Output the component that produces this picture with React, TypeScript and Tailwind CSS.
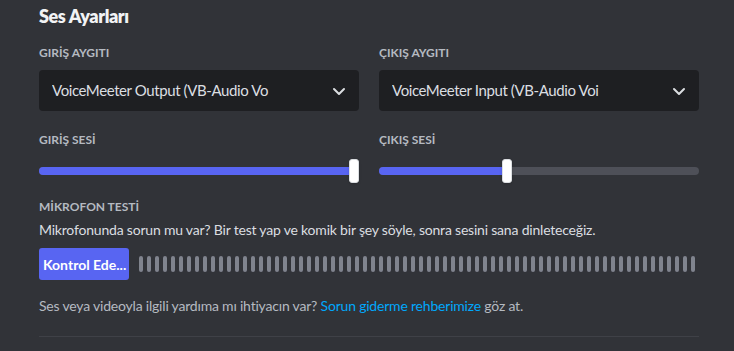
import React from "react";

const Chevron: React.FC = () => (
  <svg width="24" height="24" viewBox="0 0 24 24" fill="none" className="shrink-0">
    <path d="M7 10l5 5 5-5" stroke="#dbdee1" strokeWidth="2" strokeLinecap="round" strokeLinejoin="round" />
  </svg>
);

const Label: React.FC<{ children: React.ReactNode }> = ({ children }) => (
  <div className="text-[12px] leading-4 font-bold text-[#b5bac1] uppercase">{children}</div>
);

const Select: React.FC<{ value: string }> = ({ value }) => (
  <div className="mt-[9px] flex items-center h-[41px] rounded-[4px] bg-[#1e1f22] pl-[13px] pr-[8px]">
    <span className="flex-1 overflow-hidden whitespace-nowrap text-[15px] tracking-[-0.4px] text-[#dbdee1]">{value}</span>
    <Chevron />
  </div>
);

const Slider: React.FC<{ pct: number }> = ({ pct }) => (
  <div className="relative mt-[11px] h-6 flex items-center">
    <div className="w-full h-2 rounded-full bg-[#4e5058] overflow-hidden">
      <div className="h-full bg-[#5865f2]" style={{ width: `${pct}%` }} />
    </div>
    <div
      className="absolute top-0 w-[10px] h-6 rounded-[3px] bg-white border border-[#dbdee1] shadow"
      style={{ left: `calc(${pct}% - 5px)` }}
    />
  </div>
);

const App: React.FC = () => {
  return (
    <div className="w-[734px] h-[351px] bg-[#313338] overflow-hidden font-['Lato',sans-serif]">
      <div className="w-[660px] ml-[39px]">
        <h2 className="pt-1 text-[18px] leading-6 font-extrabold tracking-[-0.4px] text-[#f2f3f5]">Ses Ayarları</h2>

        <div className="mt-[17px] grid grid-cols-2 gap-5">
          <div>
            <Label>Giri̇ş Aygıtı</Label>
            <Select value="VoiceMeeter Output (VB-Audio Vo" />
          </div>
          <div>
            <Label>Çıkış Aygıtı</Label>
            <Select value="VoiceMeeter Input (VB-Audio Voi" />
          </div>
        </div>

        <div className="mt-[21px] grid grid-cols-2 gap-5">
          <div>
            <Label>Giri̇ş Sesi̇</Label>
            <Slider pct={98.4} />
          </div>
          <div>
            <Label>Çıkış Sesi̇</Label>
            <Slider pct={40} />
          </div>
        </div>

        <div className="mt-4">
          <Label>Mi̇krofon Testi̇</Label>
          <p className="mt-[6px] text-[14px] leading-[18px] tracking-[-0.2px] text-[#dbdee1]">
            Mikrofonunda sorun mu var? Bir test yap ve komik bir şey söyle, sonra sesini sana dinleteceğiz.
          </p>
          <div className="mt-[9px] flex items-center gap-[10px]">
            <button className="w-[90px] h-8 rounded-[3px] bg-[#5865f2] text-white text-[14px] font-bold whitespace-nowrap px-1">
              Kontrol Ede...
            </button>
            <div className="flex gap-1">
              {Array.from({ length: 70 }).map((_, i) => (
                <div key={i} className="w-1 h-4 rounded-full bg-[#80848e]" />
              ))}
            </div>
          </div>
        </div>

        <p className="mt-[17px] text-[14px] leading-[18px] tracking-[-0.2px] text-[#b5bac1]">
          Ses veya videoyla ilgili yardıma mı ihtiyacın var?{" "}
          <span className="text-[#00a8fc]">Sorun giderme rehberimize</span> göz at.
        </p>

        <div className="mt-[21px] h-px bg-[#3f4147]" />
      </div>
    </div>
  );
};

export default App;
